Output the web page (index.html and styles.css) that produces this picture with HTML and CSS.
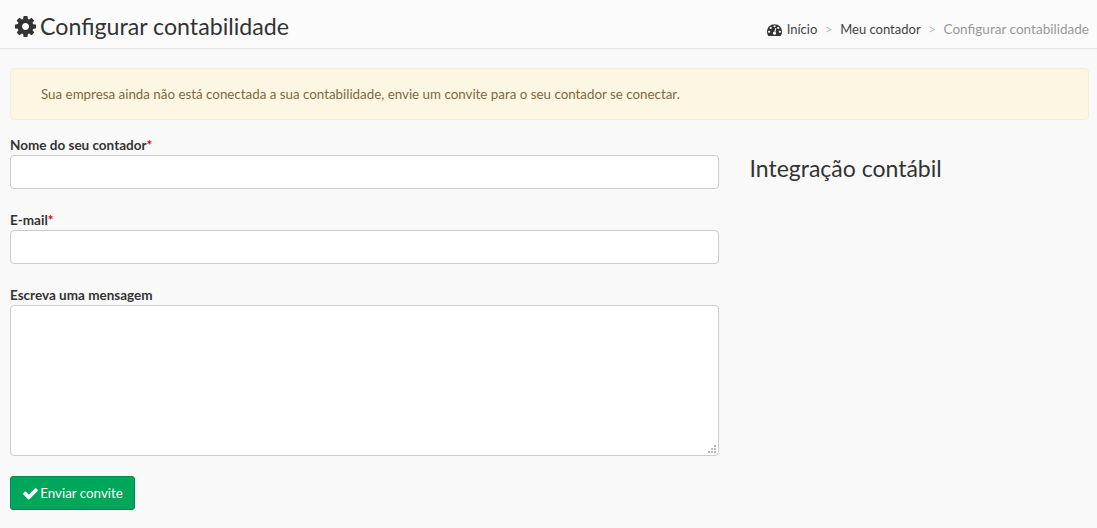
FILE: index.html
```html
<!DOCTYPE html>
<html lang="pt-BR">
<head>
    <meta charset="UTF-8">
    <meta name="viewport" content="width=device-width, initial-scale=1.0">
    <title>Configurar contabilidade</title>
    <link rel="stylesheet" href="styles.css">
</head>
<body>
    <header class="page-header">
        <h1 class="page-title">
            <svg class="title-icon" viewBox="0 0 1536 1536"><path d="M1024 768q0-106-75-181t-181-75-181 75-75 181 75 181 181 75 181-75 75-181zm512-109v222q0 12-8 23t-20 13l-185 28q-19 54-39 91 35 50 107 138 10 12 10 25t-9 23q-27 37-99 108t-94 71q-12 0-26-9l-138-108q-44 23-91 38-16 136-29 186-7 28-36 28h-222q-14 0-24.5-8.5t-11.5-21.5l-28-184q-49-16-90-37l-141 107q-10 9-25 9-14 0-25-11-126-114-165-168-7-10-7-23 0-12 8-23 15-21 51-66.5t54-70.5q-27-50-41-99l-183-27q-13-2-21-12.5t-8-23.5v-222q0-12 8-23t19-13l186-28q14-46 39-92-40-57-107-138-10-12-10-24 0-10 9-23 26-36 98.5-107.5t94.5-71.5q13 0 26 10l138 107q44-23 91-38 16-136 29-186 7-28 36-28h222q14 0 24.5 8.5t11.5 21.5l28 184q49 16 90 37l142-107q9-9 24-9 13 0 25 10 129 119 165 170 7 8 7 22 0 12-8 23-15 21-51 66.5t-54 70.5q26 50 41 98l183 28q13 2 21 12.5t8 23.5z"/></svg>
            Configurar contabilidade
        </h1>
        <nav class="breadcrumb">
            <a class="crumb" href="#">
                <svg class="crumb-icon" viewBox="0 0 1792 1792"><path d="M384 1152q0-53-37.5-90.5t-90.5-37.5-90.5 37.5-37.5 90.5 37.5 90.5 90.5 37.5 90.5-37.5 37.5-90.5zm192-448q0-53-37.5-90.5t-90.5-37.5-90.5 37.5-37.5 90.5 37.5 90.5 90.5 37.5 90.5-37.5 37.5-90.5zm428 481l101-382q6-26-7.5-48.5t-38.5-29.5-48 6.5-30 39.5l-101 382q-60 5-107 43.5t-63 98.5q-20 77 20 146t117 89 146-20 89-117q16-60-6-117t-72-91zm660-33q0-53-37.5-90.5t-90.5-37.5-90.5 37.5-37.5 90.5 37.5 90.5 90.5 37.5 90.5-37.5 37.5-90.5zm-640-640q0-53-37.5-90.5t-90.5-37.5-90.5 37.5-37.5 90.5 37.5 90.5 90.5 37.5 90.5-37.5 37.5-90.5zm448 192q0-53-37.5-90.5t-90.5-37.5-90.5 37.5-37.5 90.5 37.5 90.5 90.5 37.5 90.5-37.5 37.5-90.5zm320 448q0 261-141 483-19 29-54 29h-1402q-35 0-54-29-141-221-141-483 0-182 71-348t191-286 286-191 348-71 348 71 286 191 191 286 71 348z"/></svg>
                Início
            </a>
            <span class="crumb-sep">&gt;</span>
            <a class="crumb" href="#">Meu contador</a>
            <span class="crumb-sep">&gt;</span>
            <span class="crumb-current">Configurar contabilidade</span>
        </nav>
    </header>

    <main class="content">
        <div class="alert">Sua empresa ainda não está conectada a sua contabilidade, envie um convite para o seu contador se conectar.</div>

        <div class="columns">
            <form class="invite-form">
                <div class="field">
                    <label class="field-label" for="nome">Nome do seu contador<span class="required">*</span></label>
                    <input class="field-input" type="text" id="nome">
                </div>
                <div class="field">
                    <label class="field-label" for="email">E-mail<span class="required">*</span></label>
                    <input class="field-input" type="text" id="email">
                </div>
                <div class="field field-last">
                    <label class="field-label" for="mensagem">Escreva uma mensagem</label>
                    <div class="textarea-wrap">
                        <textarea class="field-input field-textarea" id="mensagem"></textarea>
                        <svg class="grip" viewBox="0 0 8 8"><path d="M6 0h2v2H6zM3 3h2v2H3zM6 3h2v2H6zM0 6h2v2H0zM3 6h2v2H3zM6 6h2v2H6z"/></svg>
                    </div>
                </div>
                <button class="btn-send" type="button">
                    <svg class="btn-icon" viewBox="0 0 1792 1792"><path d="M1671 566q0 40-28 68l-724 724-136 136q-28 28-68 28t-68-28l-136-136-362-362q-28-28-28-68t28-68l136-136q28-28 68-28t68 28l294 295 656-657q28-28 68-28t68 28l136 136q28 28 28 68z"/></svg>
                    Enviar convite
                </button>
            </form>
            <aside class="side">
                <h2 class="side-title">Integração contábil</h2>
            </aside>
        </div>
    </main>
</body>
</html>
```

FILE: styles.css
```css
* {
    box-sizing: border-box;
}

body {
    margin: 0;
    background-color: #f9f9f9;
    color: #333;
    font-family: 'Lato', 'Noto Sans', sans-serif;
    font-size: 13.35px;
}

.page-header {
    display: flex;
    justify-content: space-between;
    height: 49px;
    padding: 0 8px 0 15px;
    background-color: #fbfbfb;
    border-bottom: 1px solid #e6e6e6;
    box-shadow: 0 1px 2px rgba(0, 0, 0, 0.04);
}

.page-title {
    display: flex;
    align-items: center;
    gap: 4px;
    margin: 0;
    height: 52px;
    font-size: 23.2px;
    font-weight: 400;
    color: #333;
}

.title-icon {
    width: 21px;
    height: 21px;
    fill: #333;
}

.breadcrumb {
    display: flex;
    align-items: center;
    height: 58px;
    font-size: 13.55px;
}

.crumb {
    display: flex;
    align-items: center;
    gap: 5px;
    color: #444;
    font-size: 13px;
    text-decoration: none;
}

.crumb-icon {
    width: 15px;
    height: 15px;
    fill: #333;
}

.crumb-sep {
    margin: 0 7.5px;
    color: #bbb;
}

.crumb-current {
    color: #999;
}

.content {
    padding: 19px 8px 0 10px;
}

.alert {
    height: 52px;
    padding: 0 30px;
    display: flex;
    align-items: center;
    background-color: #fdf6e3;
    border: 1px solid #f8eed2;
    border-radius: 4px;
    color: #7d6a42;
}

.columns {
    display: flex;
    gap: 31px;
    margin-top: 16px;
}

.invite-form {
    width: 709px;
    flex: none;
}

.field {
    margin-bottom: 22px;
}

.field-last {
    margin-bottom: 20px;
}

.field-label {
    display: block;
    height: 19px;
    line-height: 19px;
    font-size: 13.5px;
    font-weight: 700;
    color: #333;
}

.required {
    color: #d0021b;
}

.field-input {
    display: block;
    width: 100%;
    height: 34px;
    background-color: #fff;
    border: 1px solid #ccc;
    border-radius: 4px;
}

.textarea-wrap {
    position: relative;
}

.field-textarea {
    height: 151px;
    resize: none;
}

.grip {
    position: absolute;
    right: 3px;
    bottom: 3px;
    width: 8px;
    height: 8px;
    fill: #bbb;
}

.btn-send {
    display: flex;
    align-items: center;
    justify-content: center;
    gap: 1px;
    width: 125px;
    height: 34px;
    background-color: #00a65a;
    border: 1px solid #008d4c;
    border-radius: 3px;
    color: #fff;
    font-family: inherit;
    font-size: 13.35px;
}

.btn-icon {
    width: 17px;
    height: 17px;
    fill: #fff;
}

.side {
    flex: 1;
}

.side-title {
    margin: 18px 0 0 -0.5px;
    font-size: 23px;
    font-weight: 400;
    color: #333;
}
```
